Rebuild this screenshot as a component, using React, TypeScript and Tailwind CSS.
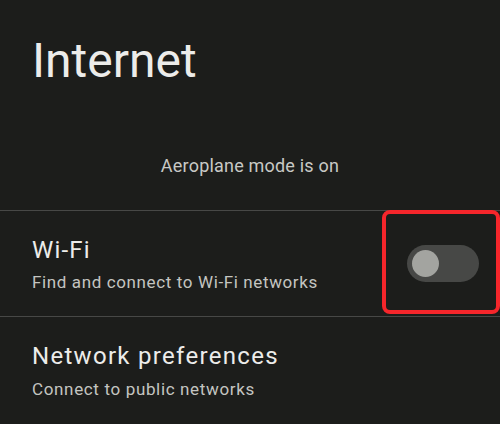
import React from "react";

export default function App() {
  return (
    <div
      className="relative w-[500px] h-[424px] overflow-hidden bg-[#1c1d1b] text-[#e6e6e3]"
      style={{ fontFamily: "Roboto, 'Noto Sans', sans-serif" }}
    >
      <div className="pl-[32px] pt-[33px] h-[154px]">
        <h1 className="text-[48px] leading-[56px] font-normal text-[#ececea]">Internet</h1>
      </div>
      <div className="h-[56px] text-center text-[18px] leading-[24px] tracking-[0.2px] text-[#c8c9c5]">
        Aeroplane mode is on
      </div>
      <div className="h-px bg-[#474846]" />
      <div className="flex items-center justify-between h-[105px] pl-[32px] pr-[21px]">
        <div className="flex flex-col">
          <div className="text-[24px] leading-[30px] tracking-[1.2px] text-[#ececea]">Wi-Fi</div>
          <div className="mt-[6px] text-[17px] leading-[22px] tracking-[0.62px] text-[#c4c5c1]">
            Find and connect to Wi-Fi networks
          </div>
        </div>
        <div className="relative w-[72px] h-[37px] rounded-full bg-[#474846] flex items-center pl-[5px]">
          <div className="w-[27px] h-[27px] rounded-full bg-[#a3a4a0]" />
        </div>
      </div>
      <div className="h-px bg-[#474846]" />
      <div className="flex flex-col pl-[32px] pt-[24px]">
        <div className="text-[24px] leading-[30px] tracking-[1.3px] text-[#ececea]">Network preferences</div>
        <div className="mt-[7px] text-[17px] leading-[22px] tracking-[0.65px] text-[#c4c5c1]">
          Connect to public networks
        </div>
      </div>
      <div className="absolute left-[382px] top-[210px] w-[118px] h-[104px] border-[4px] border-[#f5262b] rounded-[8px]" />
    </div>
  );
}
